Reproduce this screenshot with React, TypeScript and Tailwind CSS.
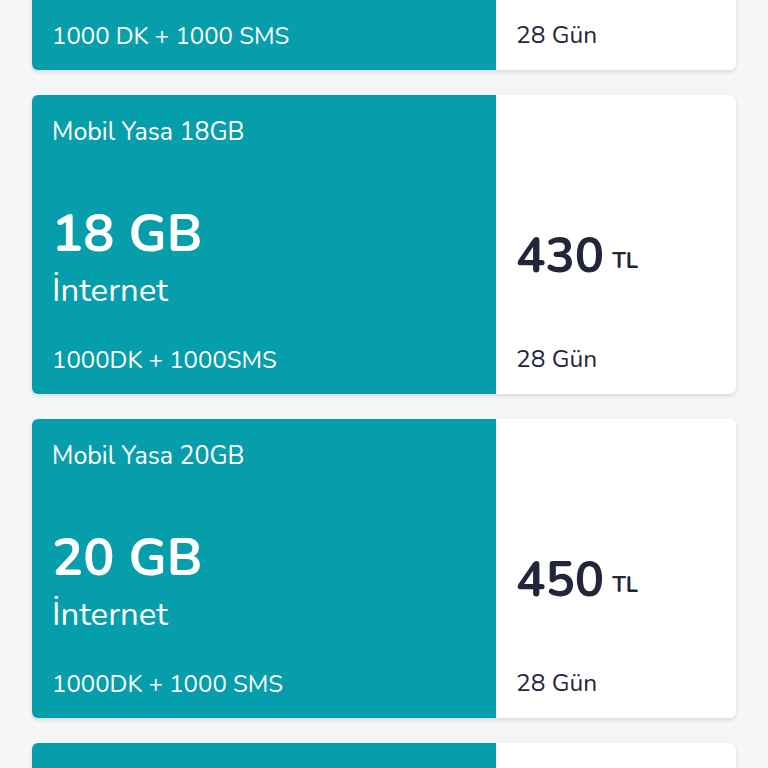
import React from "react";

type Plan = { title: string; gb: string; extra: string; price: string };

const plans: Plan[] = [
  { title: "Mobil Yasa 16GB", gb: "16 GB", extra: "1000 DK + 1000 SMS", price: "410" },
  { title: "Mobil Yasa 18GB", gb: "18 GB", extra: "1000DK + 1000SMS", price: "430" },
  { title: "Mobil Yasa 20GB", gb: "20 GB", extra: "1000DK + 1000 SMS", price: "450" },
  { title: "Mobil Yasa 25GB", gb: "25 GB", extra: "1000DK + 1000 SMS", price: "490" },
];

function Card({ p }: { p: Plan }) {
  return (
    <div className="flex h-[299px] w-[704px] overflow-hidden rounded-[6px] bg-white shadow-[0_2px_4px_rgba(0,0,0,0.12)]">
      <div className="flex w-[464px] flex-col bg-[#079eac] px-[20px] text-white">
        <div className="mt-[22px] h-[30px] text-[25px] leading-[30px]">{p.title}</div>
        <div className="mt-[59px] h-[56px] text-[52px] font-bold leading-[56px]">{p.gb}</div>
        <div className="mt-[11px] h-[36px] text-[33px] leading-[36px]">İnternet</div>
        <div className="mt-[36px] h-[30px] text-[24px] leading-[30px]">{p.extra}</div>
      </div>
      <div className="flex flex-1 flex-col px-[20px] text-[#23263b]">
        <div className="mt-[133px] flex h-[56px] items-baseline">
          <span className="text-[49px] font-bold leading-[56px]">{p.price}</span>
          <span className="ml-[8px] -translate-y-[4px] text-[22px] font-bold">TL</span>
        </div>
        <div className="mt-[60px] h-[30px] text-[24.5px] leading-[30px]">28 Gün</div>
      </div>
    </div>
  );
}

export default function App() {
  return (
    <div
      className="h-[768px] w-[768px] overflow-hidden bg-[#f5f6f8]"
      style={{ fontFamily: "'Nunito', 'Lato', 'Noto Sans', sans-serif" }}
    >
      <div className="mt-[-229px] flex flex-col items-center gap-[25px]">
        {plans.map((p) => (
          <Card key={p.title} p={p} />
        ))}
      </div>
    </div>
  );
}
